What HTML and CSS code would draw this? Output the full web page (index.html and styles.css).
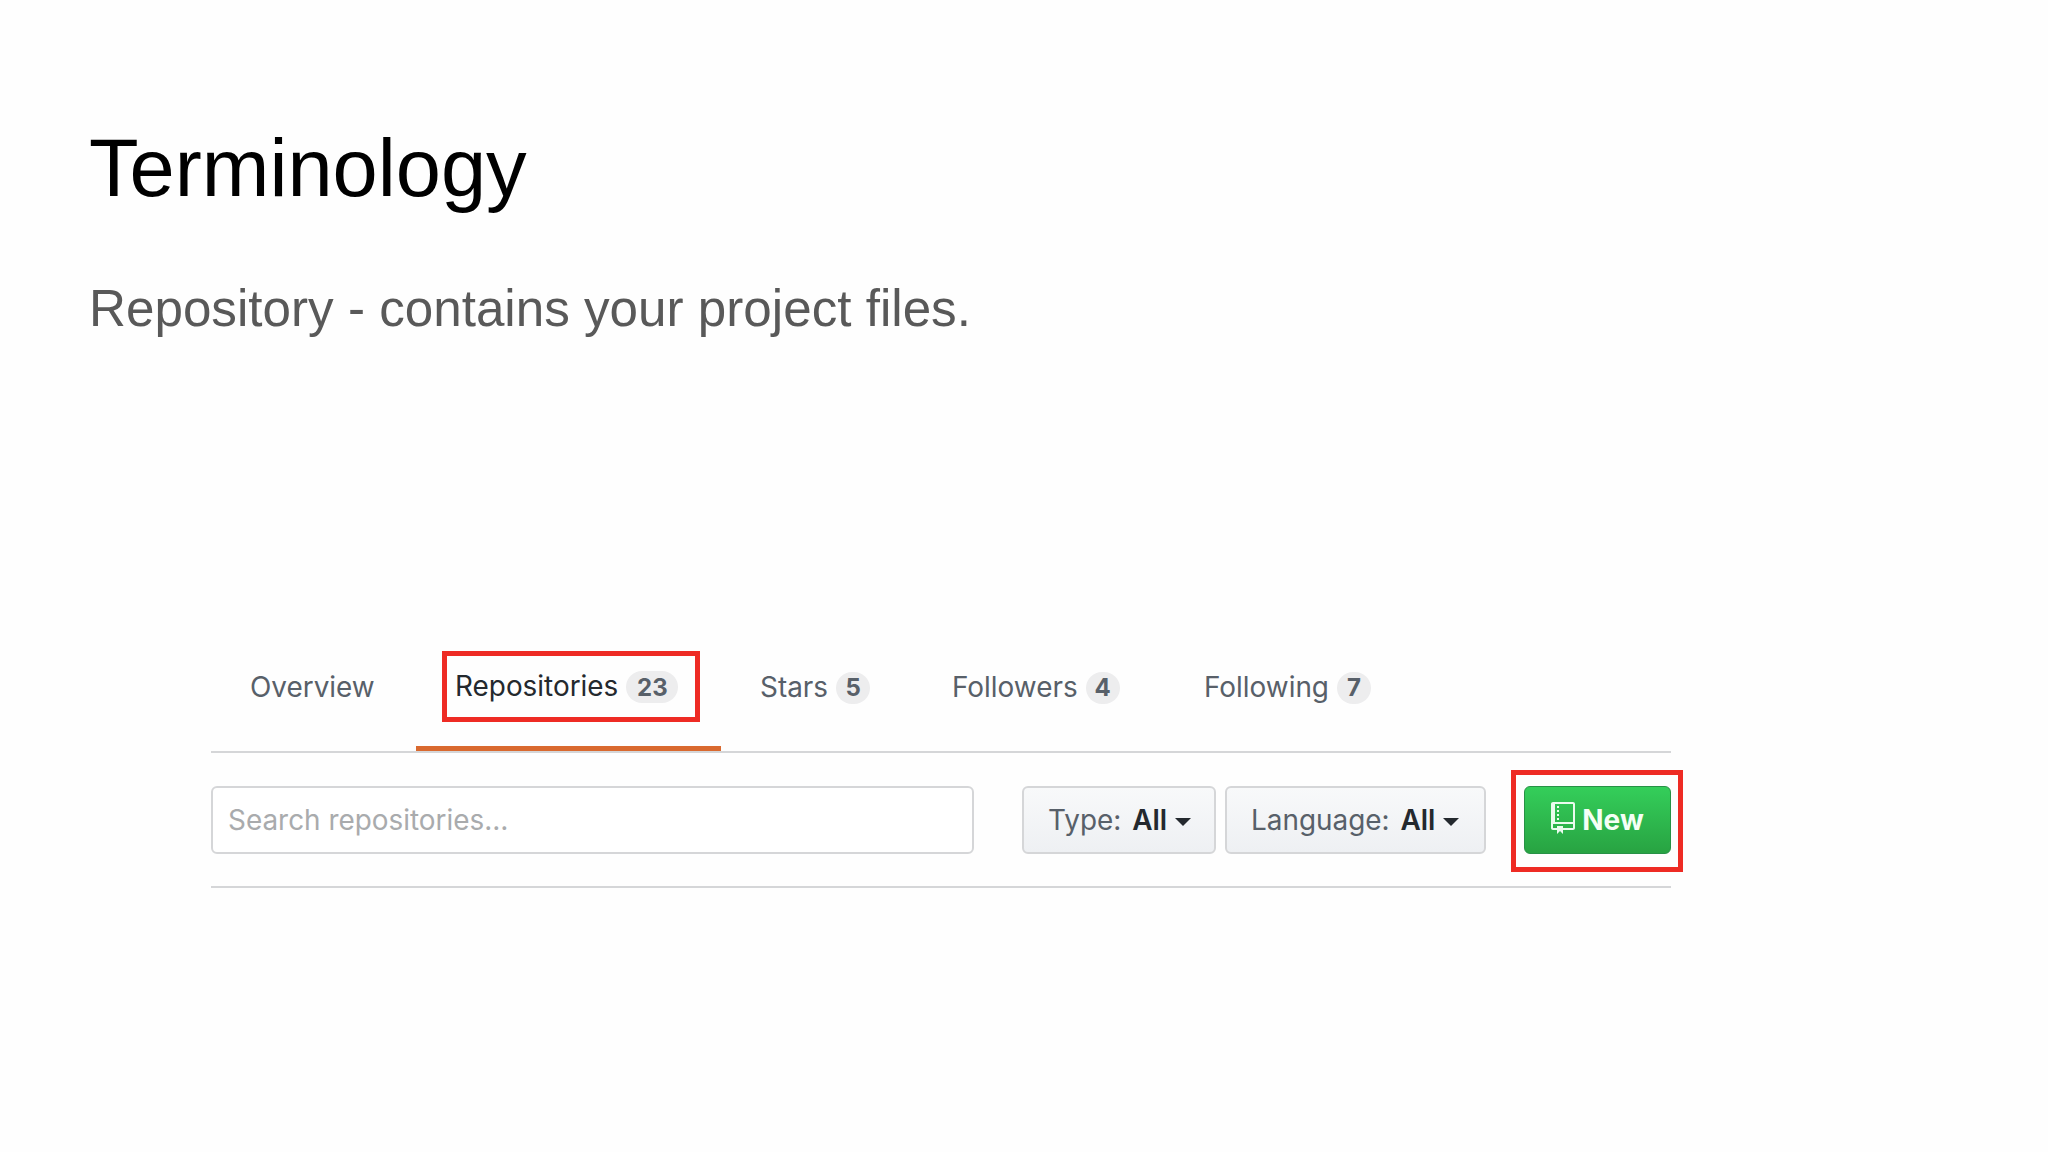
FILE: index.html
```html
<!DOCTYPE html>
<html lang="en">
<head>
<meta charset="utf-8">
<title>Terminology</title>
<link rel="stylesheet" href="styles.css">
</head>
<body>
<main class="slide">
  <h1 class="title">Terminology</h1>
  <p class="subtitle">Repository - contains your project files.</p>
  <section class="repo">
    <nav class="tabs">
      <a class="tab tab-overview">Overview</a>
      <a class="tab tab-active"><span class="tab-label">Repositories</span><span class="count count-wide">23</span><span class="callout callout-tab"></span></a>
      <a class="tab tab-stars"><span class="tab-label">Stars</span><span class="count">5</span></a>
      <a class="tab tab-followers"><span class="tab-label">Followers</span><span class="count">4</span></a>
      <a class="tab tab-following"><span class="tab-label">Following</span><span class="count">7</span></a>
    </nav>
    <div class="filters">
      <div class="search">Search repositories…</div>
      <div class="select select-type">Type: <b>All</b><i class="caret"></i></div>
      <div class="select select-language">Language: <b>All</b><i class="caret"></i></div>
      <div class="new-btn">
        <svg class="repo-icon" viewBox="0 0 12 16" aria-hidden="true"><path fill-rule="evenodd" d="M4 9H3V8h1v1zm0-3H3v1h1V6zm0-2H3v1h1V4zm0-2H3v1h1V2zm8-1v12c0 .55-.45 1-1 1H6v2l-1.5-1.5L3 16v-2H1c-.55 0-1-.45-1-1V1c0-.55.45-1 1-1h10c.55 0 1 .45 1 1zm-1 10H1v2h2v-1h3v1h5v-2zm0-10H2v9h9V1z"/></svg>
        <span>New</span>
        <span class="callout callout-new"></span>
      </div>
    </div>
  </section>
</main>
</body>
</html>
```
FILE: styles.css
```css
* { box-sizing: border-box; }
html, body { margin: 0; background: #fefefe; }
.slide {
  width: 2048px;
  height: 1152px;
  padding: 124px 0 0 89px;
  overflow: hidden;
  font-family: "Liberation Sans", Arial, sans-serif;
}
.title {
  margin: 0;
  font-size: 81.2px;
  line-height: 88px;
  font-weight: 400;
  color: #000;
}
.subtitle {
  margin: 67px 0 0;
  font-size: 51.2px;
  line-height: 60px;
  color: #595959;
}
.repo {
  width: 1460px;
  margin: 293px 0 0 122px;
  font-family: Inter, "Liberation Sans", sans-serif;
  font-size: 27.9px;
  color: #586069;
}
.tabs {
  display: flex;
  height: 121px;
  border-bottom: 2px solid #d5d6d8;
}
.tab {
  position: relative;
  display: flex;
  align-items: center;
  height: 119px;
  padding: 0 40px 10px 39px;
  gap: 8px;
}
.tab-overview { width: 205px; }
.tab-active {
  width: 305px;
  color: #24292e;
  border-bottom: 5px solid #d9692f;
  padding-bottom: 6px;
}
.tab-stars { width: 191px; }
.tab-followers { width: 251px; padding-left: 40px; }
.tab-following { padding-left: 41px; }
.count {
  display: flex;
  align-items: center;
  justify-content: center;
  min-width: 34px;
  height: 32px;
  margin-top: 2px;
  border-radius: 16px;
  background: #ededee;
  color: #586069;
  font-size: 24px;
  font-weight: 700;
}
.count-wide { width: 52px; }
.callout {
  position: absolute;
  border: 5px solid #ee2b24;
  pointer-events: none;
}
.callout-tab { left: 26px; top: 19px; width: 258px; height: 71px; }
.callout-new { left: -14px; top: -17px; width: 172px; height: 102px; }
.filters {
  display: flex;
  align-items: center;
  height: 135px;
  padding-top: 1px;
  border-bottom: 2px solid #d5d6d8;
}
.search {
  display: flex;
  align-items: center;
  width: 763px;
  height: 68px;
  padding-left: 15px;
  margin-right: 49px;
  border: 2px solid #d5d6d8;
  border-radius: 6px;
  background: #fff;
  color: #a9abad;
}
.select {
  display: flex;
  align-items: center;
  height: 68px;
  padding-left: 24px;
  white-space: pre;
  border: 2px solid #d5d6d8;
  border-radius: 6px;
  background: linear-gradient(#f8f9fa, #eef0f3);
}
.select b { margin-left: 3px; color: #24292e; font-weight: 600; }
.select-type { width: 194px; margin-right: 9px; margin-left: -1px; }
.select-language { width: 261px; margin-right: 38px; }
.caret {
  margin: 3px 0 0 8px;
  border-style: solid;
  border-width: 8px 8px 0;
  border-color: #24292e transparent transparent;
}
.new-btn {
  position: relative;
  display: flex;
  align-items: center;
  justify-content: center;
  gap: 7px;
  width: 147px;
  height: 68px;
  border: 1px solid #279146;
  border-radius: 6px;
  background: linear-gradient(#34ce5a, #28a342);
  color: #f4fff6;
  font-weight: 700;
  font-size: 28px;
}
.repo-icon { width: 24px; height: 32px; margin-top: -5px; fill: #eafbee; }
```
